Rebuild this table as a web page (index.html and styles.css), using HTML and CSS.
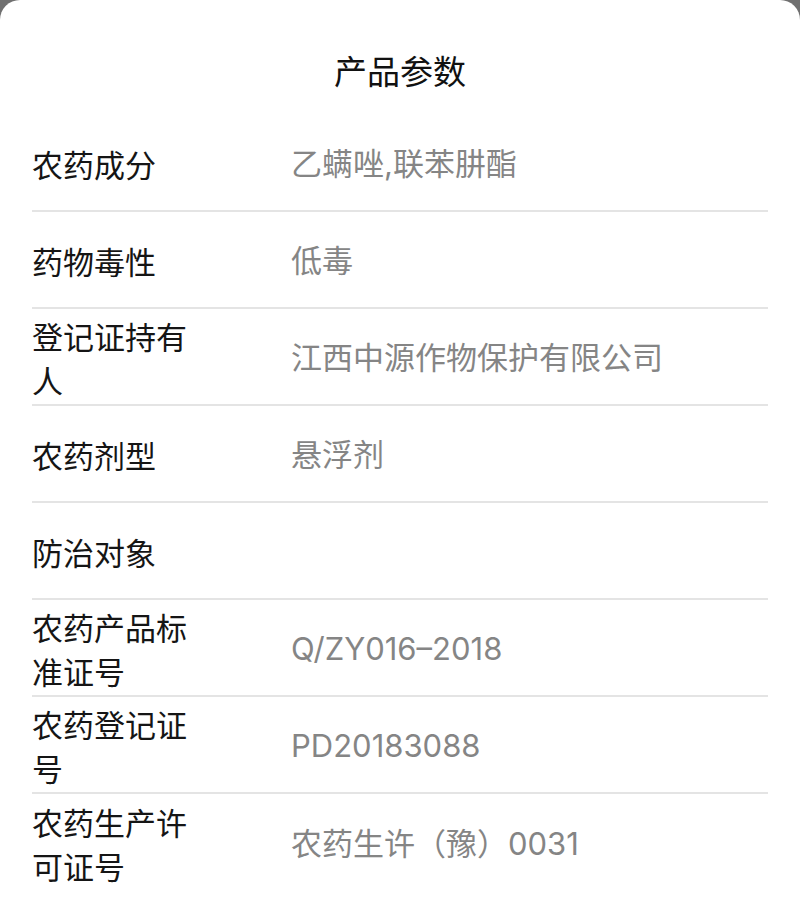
FILE: index.html
```html
<!DOCTYPE html>
<html lang="zh-CN">
<head>
<meta charset="utf-8">
<title>产品参数</title>
<link rel="stylesheet" href="styles.css">
</head>
<body>
<div class="sheet">
  <h1 class="title">产品参数</h1>
  <div class="list">
    <div class="row"><div class="label">农药成分</div><div class="value">乙螨唑,联苯肼酯</div></div>
    <div class="row"><div class="label">药物毒性</div><div class="value">低毒</div></div>
    <div class="row"><div class="label">登记证持有人</div><div class="value">江西中源作物保护有限公司</div></div>
    <div class="row"><div class="label">农药剂型</div><div class="value">悬浮剂</div></div>
    <div class="row"><div class="label">防治对象</div><div class="value"></div></div>
    <div class="row"><div class="label">农药产品标准证号</div><div class="value">Q/ZY016–2018</div></div>
    <div class="row"><div class="label">农药登记证号</div><div class="value">PD20183088</div></div>
    <div class="row last"><div class="label">农药生产许可证号</div><div class="value">农药生许（豫）0031</div></div>
  </div>
</div>
</body>
</html>
```
FILE: styles.css
```css
html, body {
  margin: 0;
  padding: 0;
  background: #707070;
}
.sheet {
  background: #ffffff;
  border-radius: 20px 20px 0 0;
  min-height: 911px;
  box-sizing: border-box;
  padding: 48px 32px 0;
  font-family: "Noto Sans CJK SC", sans-serif;
}
.title {
  margin: 0 0 23px;
  font-size: 33px;
  line-height: 44px;
  font-weight: 400;
  color: #111111;
  text-align: center;
}
.list {
  display: flex;
  flex-direction: column;
}
.row {
  display: grid;
  grid-template-columns: 170px 1fr;
  column-gap: 89px;
  align-items: center;
  height: 97px;
  box-sizing: border-box;
  padding-top: 2px;
  border-bottom: 2px solid #e4e4e4;
}
.row.last {
  border-bottom: none;
}
.label {
  font-size: 31px;
  line-height: 44px;
  color: #151515;
}
.value {
  font-family: "Inter", "Noto Sans CJK SC", sans-serif;
  font-size: 31px;
  line-height: 44px;
  color: #858585;
}
```
